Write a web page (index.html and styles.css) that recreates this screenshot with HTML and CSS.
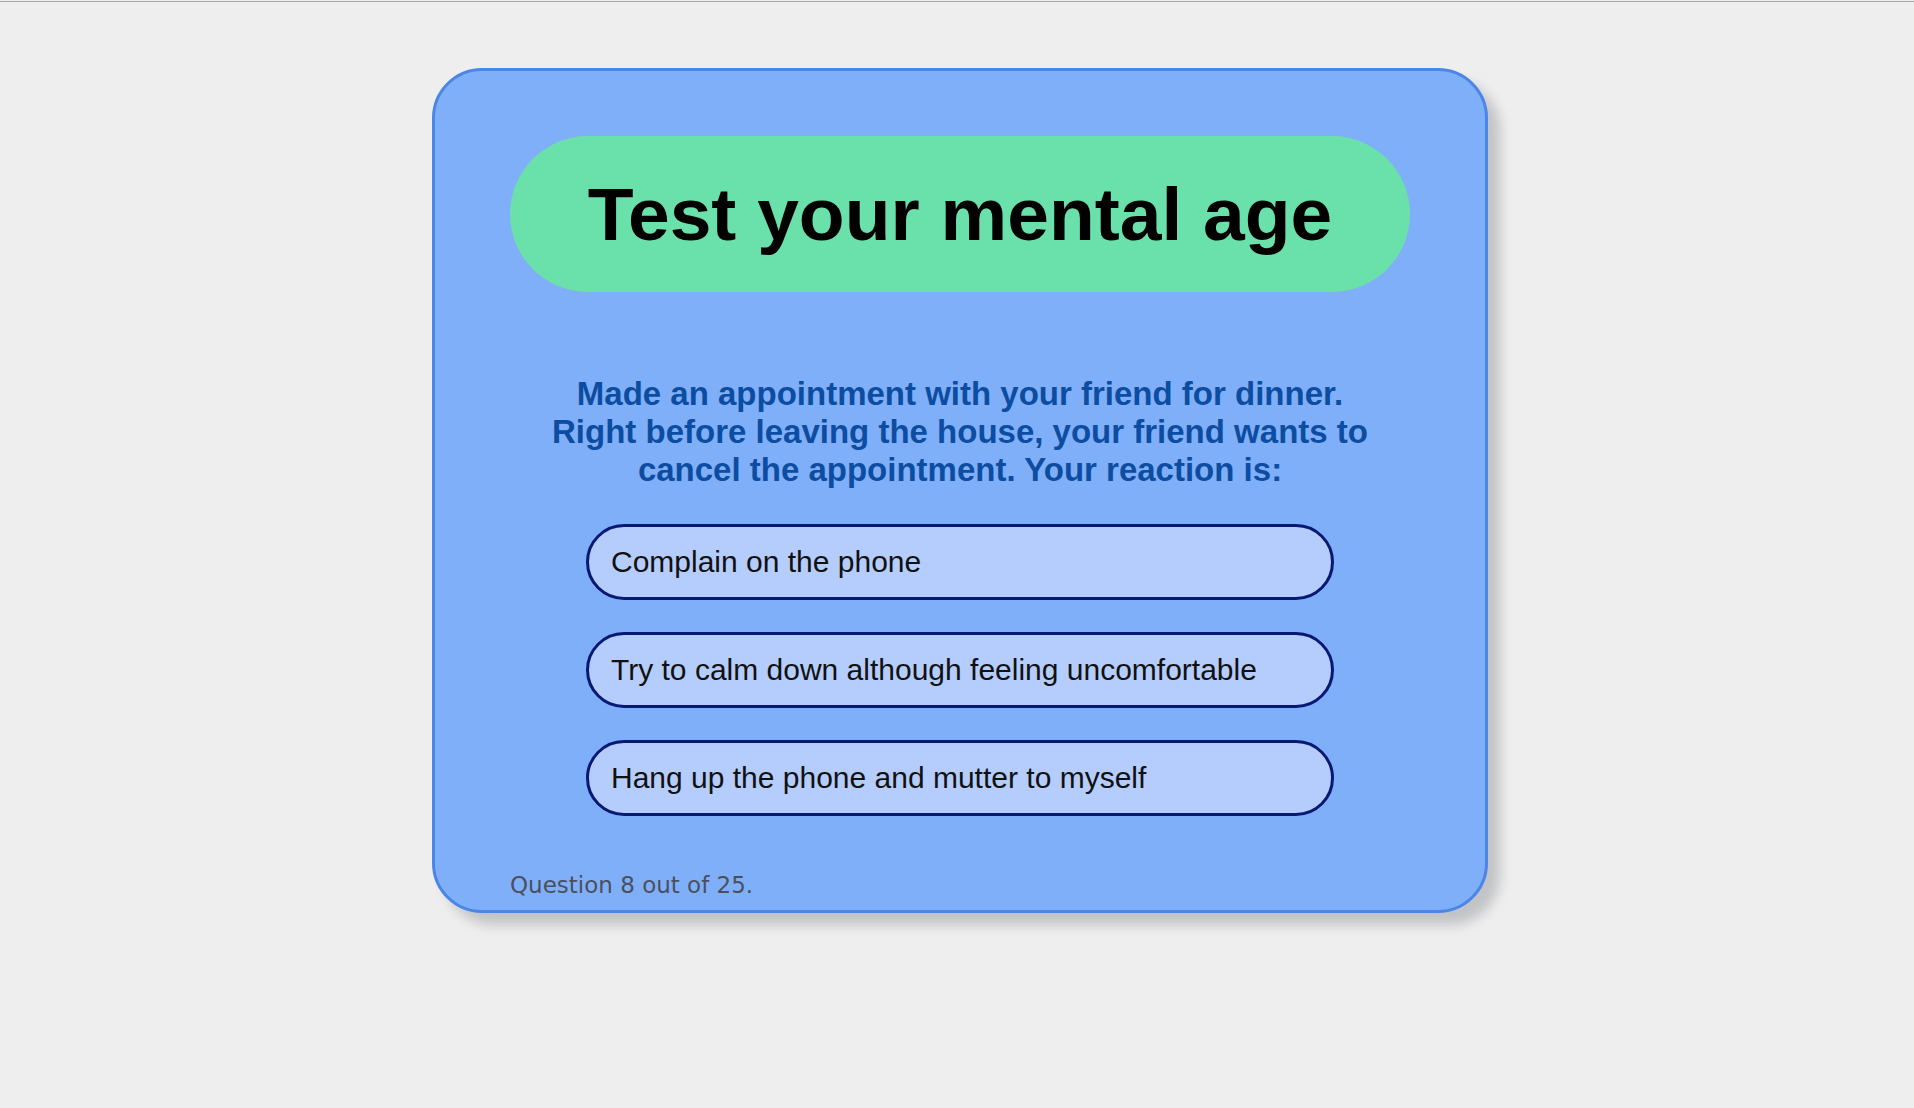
FILE: index.html
```html
<!DOCTYPE html>
<html lang="en">
<head>
<meta charset="utf-8">
<title>Test your mental age</title>
<link rel="stylesheet" href="styles.css">
</head>
<body>
<div class="topline"></div>
<main class="page">
  <section class="card">
    <div class="title-pill"><h1 class="title">Test your mental age</h1></div>
    <p class="question">Made an appointment with your friend for dinner.<br>Right before leaving the house, your friend wants to<br>cancel the appointment. Your reaction is:</p>
    <div class="options">
      <button class="option">Complain on the phone</button>
      <button class="option">Try to calm down although feeling uncomfortable</button>
      <button class="option">Hang up the phone and mutter to myself</button>
    </div>
    <p class="progress">Question 8 out of 25.</p>
  </section>
</main>
</body>
</html>
```

FILE: styles.css
```css
html, body {
  margin: 0;
  padding: 0;
  background: #eeeeee;
}
body {
  font-family: "Liberation Sans", Arial, sans-serif;
  min-height: 1108px;
}
.topline {
  height: 1px;
  margin-top: 1px;
  background: #a8a8a8;
}
.page {
  padding: 66px 0 0 432px;
}
.card {
  box-sizing: border-box;
  width: 1056px;
  height: 845px;
  border: 3px solid #4a86e8;
  border-radius: 50px;
  background: #80aff9;
  padding: 65px 75px 0;
  box-shadow: 12px 12px 12px rgba(40, 44, 60, 0.22);
  display: flex;
  flex-direction: column;
}
.title-pill {
  height: 156px;
  border-radius: 78px;
  background: #6ae0aa;
  display: flex;
  align-items: center;
  justify-content: center;
}
.title {
  margin: 0;
  font-size: 75px;
  font-weight: bold;
  line-height: 156px;
  color: #000;
}
.question {
  margin: 83px 0 0;
  text-align: center;
  font-size: 33px;
  font-weight: bold;
  line-height: 38px;
  color: #0c4da2;
}
.options {
  margin-top: 35px;
  display: flex;
  flex-direction: column;
  align-items: center;
  gap: 32px;
}
.option {
  box-sizing: border-box;
  width: 748px;
  height: 76px;
  border: 3px solid #0a1875;
  border-radius: 38px;
  background: #b5cdfd;
  padding: 0 0 0 22px;
  text-align: left;
  font-family: "Liberation Sans", Arial, sans-serif;
  font-size: 30px;
  color: #111;
  cursor: pointer;
}
.progress {
  margin: 54px 0 0;
  font-family: "DejaVu Sans", sans-serif;
  font-size: 23px;
  line-height: 30px;
  color: #4a4f5e;
}
```
